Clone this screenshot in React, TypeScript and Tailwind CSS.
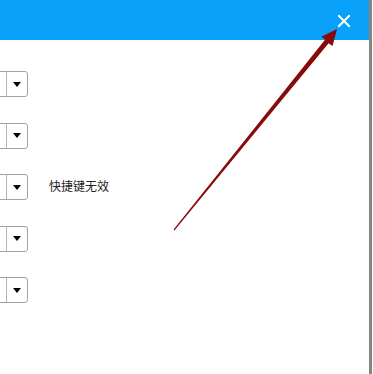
import React from 'react';

const rows = [{ note: '' }, { note: '' }, { note: '快捷键无效' }, { note: '' }, { note: '' }];

const Dropdown: React.FC = () => (
    <div className="flex h-[26px] w-[48px] -ml-[20px] border border-[#a3a3a3] rounded-[3px] bg-white">
        <div className="flex-1 border-r border-[#b5b5b5]" />
        <div className="w-[20px] flex items-center justify-center">
            <div className="w-0 h-0 border-l-[4px] border-r-[4px] border-t-[5px] border-l-transparent border-r-transparent border-t-black" />
        </div>
    </div>
);

const App: React.FC = () => {
    return (
        <div className="relative w-[373px] h-[374px] overflow-hidden bg-white" style={{ fontFamily: '"Liberation Sans", "Noto Sans CJK SC", sans-serif' }}>
            <div className="w-[372px] h-full border-r-[3px] border-[#868686] flex flex-col">
                <div className="h-[40px] bg-[#0aa1fb] flex items-center justify-end pr-[18px]">
                    <svg width="14" height="14" viewBox="0 0 14 14" className="mt-[1px]">
                        <path d="M2 2 L12 12 M12 2 L2 12" stroke="white" strokeWidth="2" strokeLinecap="square" />
                    </svg>
                </div>
                <div className="flex flex-col gap-[25.5px] pt-[31px]">
                    {rows.map((row, idx) => (
                        <div key={idx} className="flex items-center">
                            <Dropdown />
                            {row.note && <span className="ml-[21px] text-[12px] text-[#222]">{row.note}</span>}
                        </div>
                    ))}
                </div>
            </div>

            {/* red annotation arrow */}
            <svg className="absolute left-0 top-0 pointer-events-none" width="373" height="374">
                <polygon
                    points="337,29 332.5,46 328.6,43.2 174.4,230.4 173.6,229.6 325.2,39.6 321.3,36.8"
                    fill="#870b0b"
                />
            </svg>
        </div>
    );
};

export default App;
